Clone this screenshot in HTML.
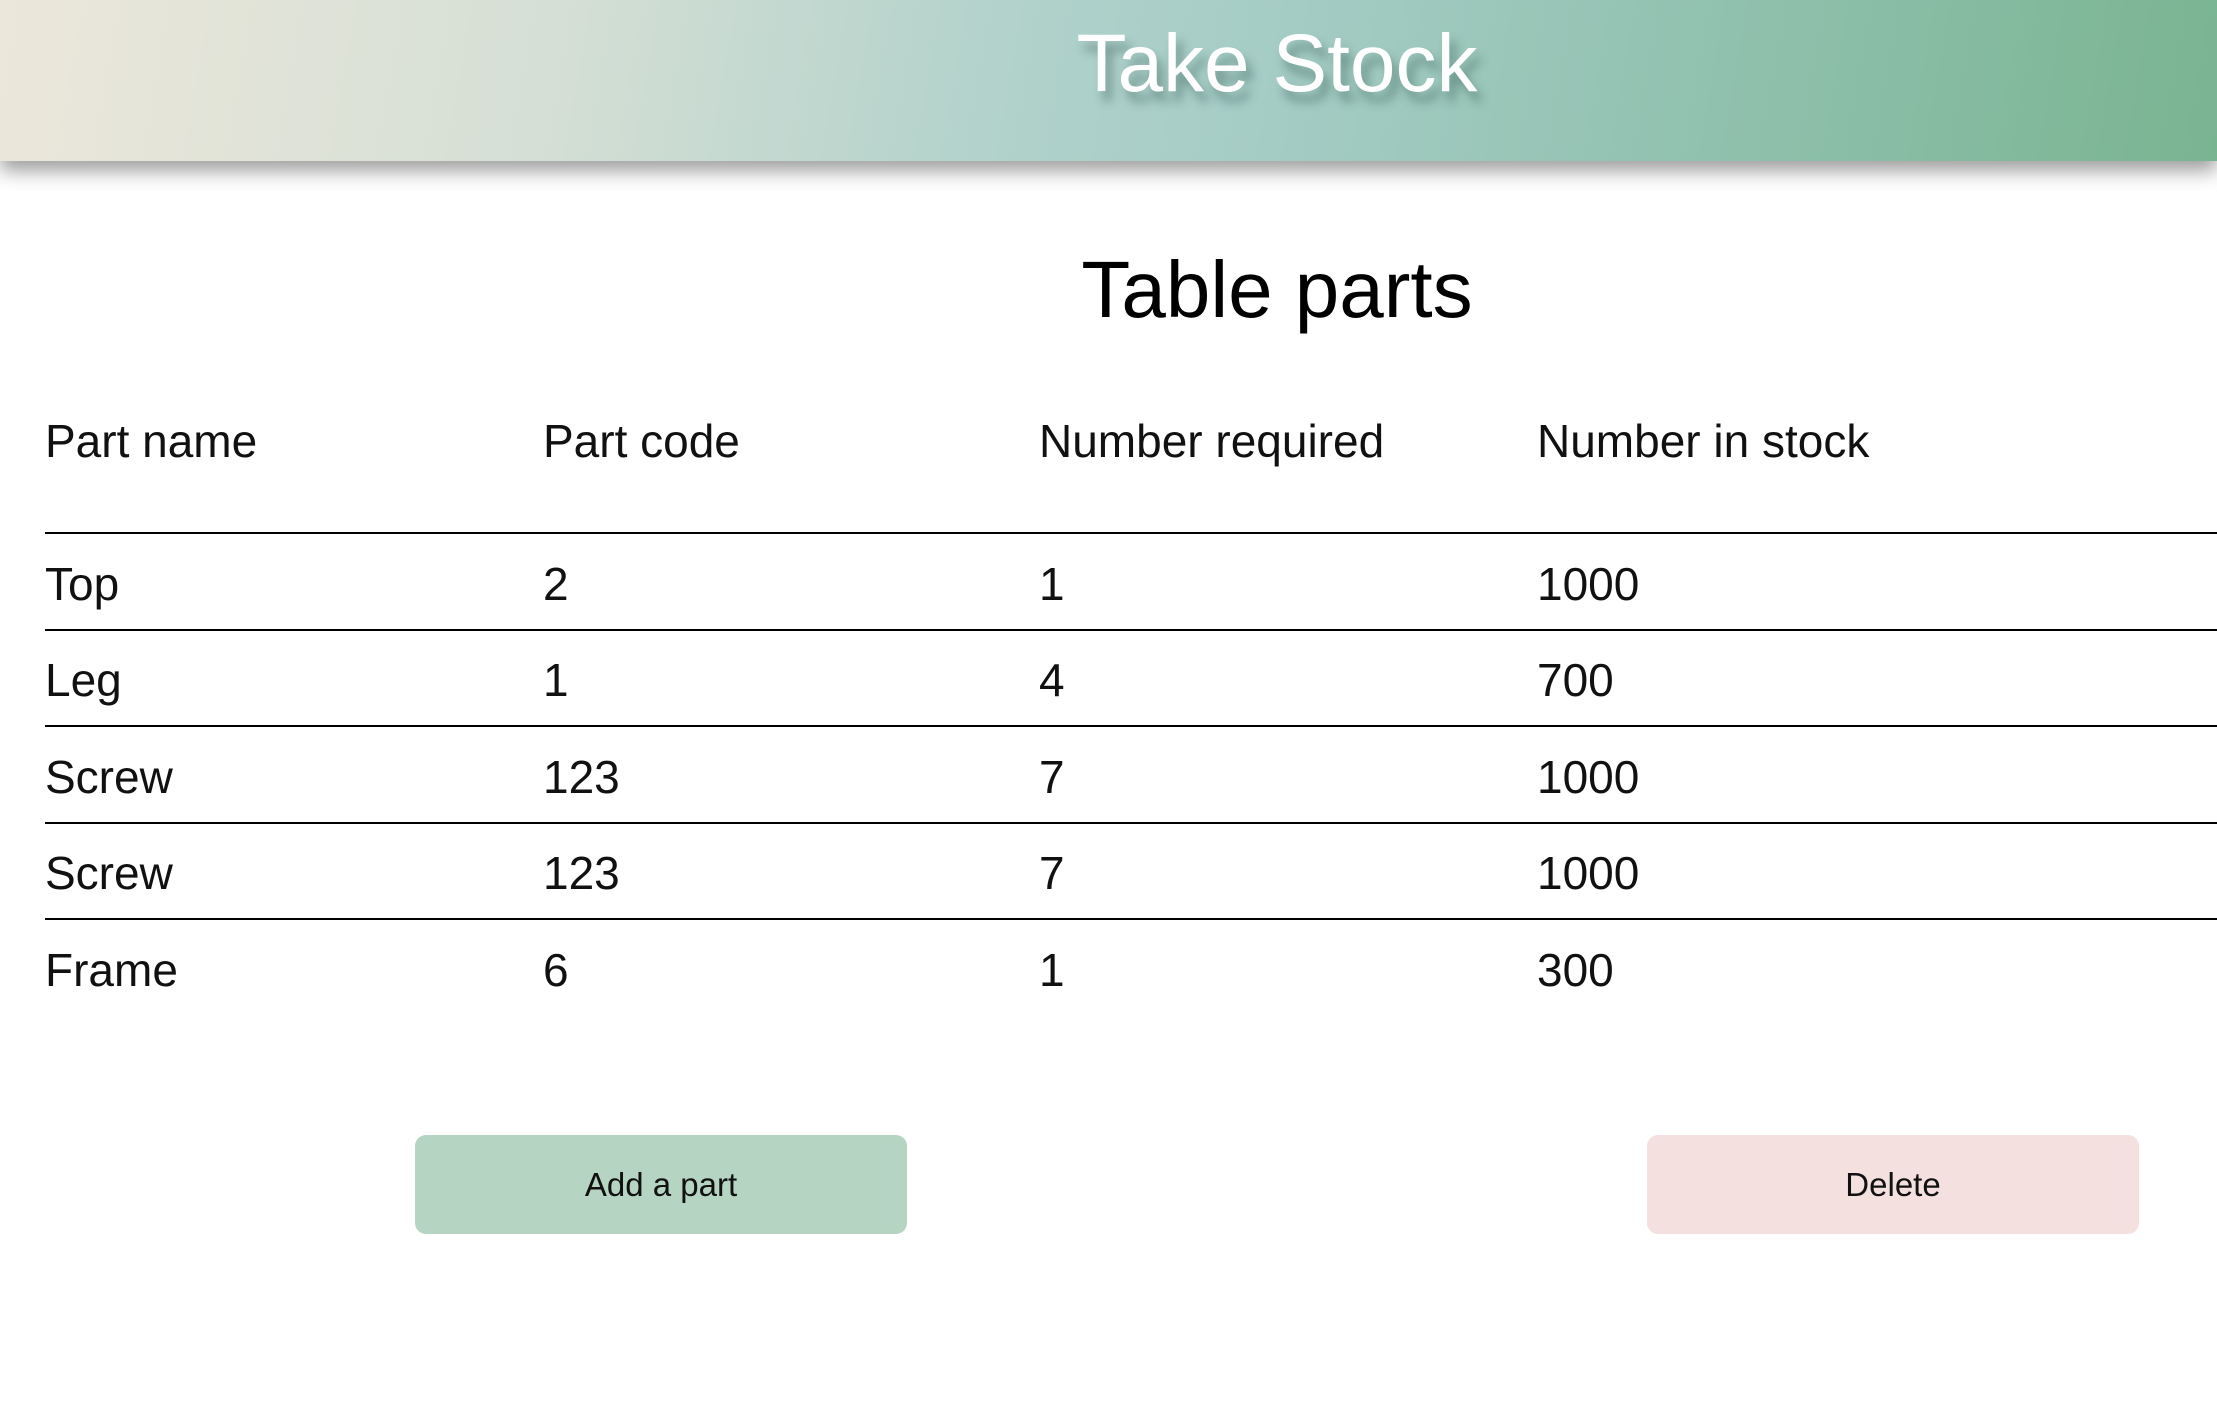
<!DOCTYPE html>
<html><head><meta charset="utf-8"><style>
html,body{margin:0;padding:0;width:2217px;height:1427px;overflow:hidden;background:#fff;font-family:"Liberation Sans","Noto Sans CJK KR",sans-serif;}
.hdr{position:absolute;left:0;top:0;width:2217px;height:161px;background:linear-gradient(100deg,#ece7db 0%,#d5dfd5 25%,#b2d2cb 45%,#a7cdc7 55%,#93c2b1 75%,#79b491 100%);box-shadow:0 10px 18px rgba(0,0,0,0.38);}
.hdr h1{position:absolute;left:0;width:2554px;top:14px;margin:0;text-align:center;font-weight:normal;font-size:82px;line-height:100px;color:#fff;text-shadow:6px 10px 10px rgba(40,80,70,0.45);}
.h2{position:absolute;left:0;width:2554px;top:240px;text-align:center;font-size:80px;line-height:100px;color:#000;}
.t{position:absolute;font-size:46px;line-height:50px;color:#111;}
.line{position:absolute;left:45px;width:2172px;height:2px;background:#000;}
.btn{position:absolute;top:1135px;height:99px;width:492px;border-radius:11px;text-align:center;line-height:99px;font-size:33px;color:#111;}
</style></head><body>
<div class="hdr"><h1>Take Stock</h1></div>
<div class="h2">Table parts</div>

<div class="t" style="left:45px;top:416px">Part name</div>
<div class="t" style="left:543px;top:416px">Part code</div>
<div class="t" style="left:1039px;top:416px">Number required</div>
<div class="t" style="left:1537px;top:416px">Number in stock</div>

<div class="line" style="top:532px"></div>
<div class="line" style="top:629px"></div>
<div class="line" style="top:725px"></div>
<div class="line" style="top:822px"></div>
<div class="line" style="top:918px"></div>

<div class="t" style="left:45px;top:559px">Top</div>
<div class="t" style="left:543px;top:559px">2</div>
<div class="t" style="left:1039px;top:559px">1</div>
<div class="t" style="left:1537px;top:559px">1000</div>

<div class="t" style="left:45px;top:655px">Leg</div>
<div class="t" style="left:543px;top:655px">1</div>
<div class="t" style="left:1039px;top:655px">4</div>
<div class="t" style="left:1537px;top:655px">700</div>

<div class="t" style="left:45px;top:752px">Screw</div>
<div class="t" style="left:543px;top:752px">123</div>
<div class="t" style="left:1039px;top:752px">7</div>
<div class="t" style="left:1537px;top:752px">1000</div>

<div class="t" style="left:45px;top:848px">Screw</div>
<div class="t" style="left:543px;top:848px">123</div>
<div class="t" style="left:1039px;top:848px">7</div>
<div class="t" style="left:1537px;top:848px">1000</div>

<div class="t" style="left:45px;top:945px">Frame</div>
<div class="t" style="left:543px;top:945px">6</div>
<div class="t" style="left:1039px;top:945px">1</div>
<div class="t" style="left:1537px;top:945px">300</div>

<div class="btn" style="left:415px;background:#b5d4c2">Add a part</div>
<div class="btn" style="left:1647px;background:#f5e0e0">Delete</div>
</body></html>
